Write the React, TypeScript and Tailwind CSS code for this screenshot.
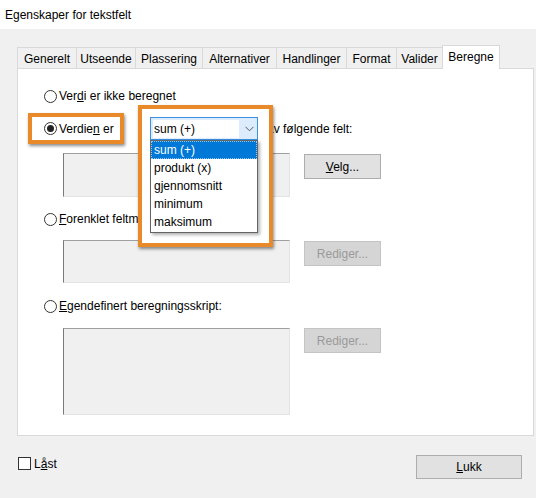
import React from 'react';

const tabs = [
  { label: 'Generelt', w: 'w-[59px]' },
  { label: 'Utseende', w: 'w-[59px]' },
  { label: 'Plassering', w: 'w-[67px]' },
  { label: 'Alternativer', w: 'w-[74px]' },
  { label: 'Handlinger', w: 'w-[70px]' },
  { label: 'Format', w: 'w-[50px]' },
  { label: 'Valider', w: 'w-[46px]' },
];

const options = ['sum (+)', 'produkt (x)', 'gjennomsnitt', 'minimum', 'maksimum'];

function Radio({ checked = false }: { checked?: boolean }) {
  return (
    <span className="w-[13px] h-[13px] rounded-full border border-[#333333] bg-white flex items-center justify-center shrink-0">
      {checked && <span className="w-[7px] h-[7px] rounded-full bg-[#222222]" />}
    </span>
  );
}

function Field({ h }: { h: string }) {
  return (
    <div
      className={`w-[227px] ${h} bg-[#f0f0f0] border border-t-[#a0a0a0] border-l-[#7a7a7a] border-r-[#e3e3e3] border-b-[#e3e3e3]`}
    />
  );
}

function Button({ children, disabled = false }: { children: React.ReactNode; disabled?: boolean }) {
  return (
    <div
      className={
        disabled
          ? 'w-[77px] h-[25px] bg-[#d5d5d5] border border-[#c4c4c4] text-[#9a9a9a] flex items-center justify-center'
          : 'w-[77px] h-[25px] bg-[#e1e1e1] border border-[#adadad] flex items-center justify-center'
      }
    >
      {children}
    </div>
  );
}

export default function App() {
  return (
    <div className="w-[536px] h-[498px] bg-[#f0f0f0] relative overflow-hidden font-['Liberation_Sans',Arial,sans-serif] text-[12px] text-black leading-none">
      {/* Title */}
      <div className="h-[29px] bg-white pl-[5px] flex items-center">Egenskaper for tekstfelt</div>

      <div className="pl-[17px] pr-[2px] pt-[16px]">
        {/* Tabs */}
        <div className="flex items-end h-[23px]">
          {tabs.map((t) => (
            <div
              key={t.label}
              className={`${t.w} h-[21px] border-t border-l border-[#d9d9d9] bg-[#f0f0f0] flex items-center justify-center pt-[2px]`}
            >
              {t.label}
            </div>
          ))}
          <div className="w-[58px] h-[24px] -mb-px relative z-10 bg-white border-t border-l border-r border-[#d9d9d9] flex items-center justify-center pb-[1px]">
            Beregne
          </div>
        </div>

        {/* Panel */}
        <div className="h-[368px] bg-white border border-[#d9d9d9] pl-[26px] pt-[19px]">
          <div className="flex items-center h-[16px]">
            <Radio />
            <span className="ml-[2px]">
              Ver<u>d</u>i er ikke beregnet
            </span>
          </div>

          <div className="flex items-center h-[23px] mt-[13px]">
            <div className="w-[106px] flex items-center">
              <Radio checked />
              <span className="ml-[2px]">
                Verdie<u>n</u> er
              </span>
            </div>
            <div className="relative z-20 w-[108px] h-[23px]">
              <div className="w-full h-full border border-[#3c8fdc] bg-[#dcecfc] flex items-center pl-[2px]">
                <div className="w-[86px] h-[18px] bg-white flex items-center pl-[1px]">sum (+)</div>
                <div className="flex-1 flex items-center justify-center pl-[2px]">
                  <svg width="9" height="6" viewBox="0 0 9 6" fill="none">
                    <path d="M0.5 0.8 L4.5 4.8 L8.5 0.8" stroke="#5a5a5a" strokeWidth="1" />
                  </svg>
                </div>
              </div>
              <div className="absolute left-0 top-full w-[108px] h-[93px] bg-white border border-[#646464] shadow-[2px_2px_3px_rgba(0,0,0,0.3)] flex flex-col">
                {options.map((o, i) => (
                  <div
                    key={o}
                    className={
                      i === 0
                        ? 'h-[18px] shrink-0 pl-[2px] flex items-center bg-[#0078d7] text-white border border-dotted border-[#9cc6ee]'
                        : 'h-[18px] shrink-0 pl-[3px] flex items-center'
                    }
                  >
                    {o}
                  </div>
                ))}
              </div>
            </div>
            <span className="ml-[9px]">av følgende felt:</span>
          </div>

          <div className="flex items-start gap-[14px] pl-[19px] mt-[13px]">
            <Field h="h-[44px]" />
            <div className="mt-[1px]">
              <Button>
                <span>
                  <u>V</u>elg...
                </span>
              </Button>
            </div>
          </div>

          <div className="flex items-center h-[16px] mt-[14px]">
            <Radio />
            <span className="ml-[2px]">
              <u>F</u>orenklet feltmerknad:
            </span>
          </div>

          <div className="flex items-start gap-[14px] pl-[19px] mt-[13px]">
            <Field h="h-[43px]" />
            <div className="mt-[1px]">
              <Button disabled>Rediger...</Button>
            </div>
          </div>

          <div className="flex items-center h-[16px] mt-[15px]">
            <Radio />
            <span className="ml-[2px]">
              <u>E</u>gendefinert beregningsskript:
            </span>
          </div>

          <div className="flex items-start gap-[14px] pl-[19px] mt-[14px]">
            <Field h="h-[87px]" />
            <Button disabled>Rediger...</Button>
          </div>
        </div>
      </div>

      {/* Footer */}
      <div className="flex items-start justify-between pl-[18px] pr-[14px] mt-[19px] h-[24px]">
        <div className="flex items-center mt-[2px] h-[13px]">
          <span className="w-[13px] h-[13px] border border-[#333333] bg-white" />
          <span className="ml-[3px]">
            L<u>å</u>st
          </span>
        </div>
        <div className="w-[106px] h-[24px] bg-[#e1e1e1] border border-[#adadad] flex items-center justify-center">
          <span>
            <u>L</u>ukk
          </span>
        </div>
      </div>

      {/* Annotation highlights (callouts drawn over the dialog) */}
      <div className="absolute left-[28px] top-[113px] w-[96px] h-[31px] border-[4px] border-[#e8892a] shadow-[1px_2px_3px_rgba(0,0,0,0.45)] pointer-events-none z-10" />
      <div className="absolute left-[138px] top-[105px] w-[135px] h-[142px] bg-white border-[4px] border-[#e8892a] shadow-[1px_2px_3px_rgba(0,0,0,0.45)] pointer-events-none z-10" />
    </div>
  );
}
